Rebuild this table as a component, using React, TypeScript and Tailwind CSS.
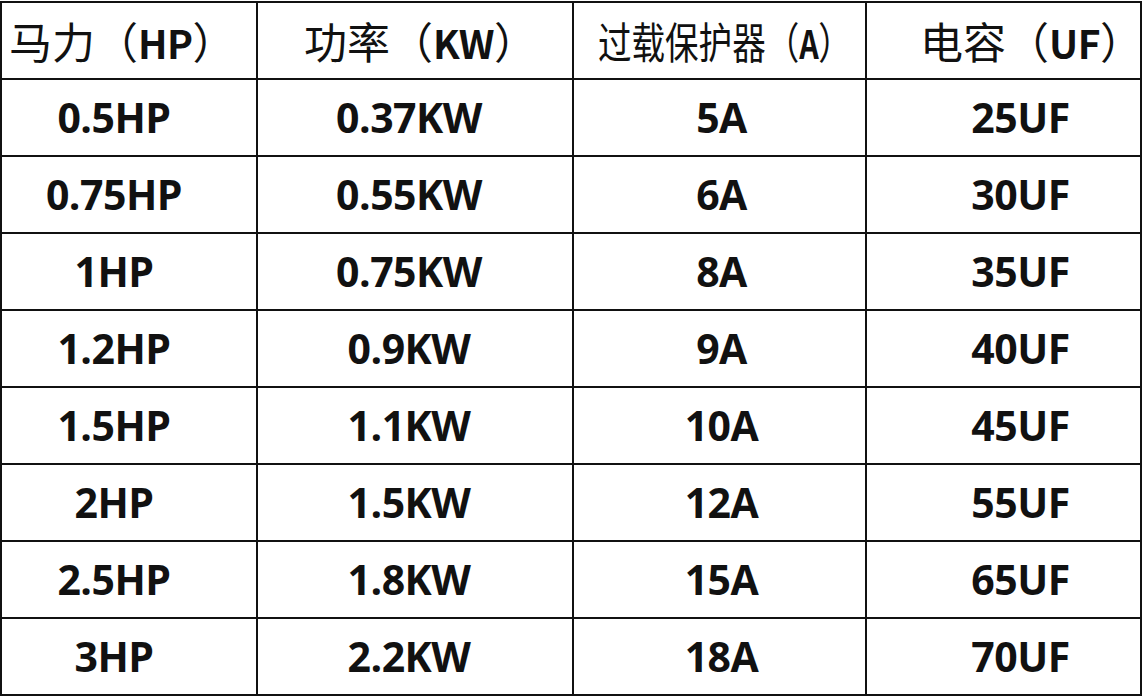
import React from 'react';

const headers = [
  { zh: '马力', unit: 'HP', pad: 'pl-[7px]', squeeze: false },
  { zh: '功率', unit: 'KW', pad: 'pl-[46px]', squeeze: false },
  { zh: '过载保护器', unit: 'A', pad: 'pl-[24px]', squeeze: true },
  { zh: '电容', unit: 'UF', pad: 'pl-[53px]', squeeze: false },
];

const rows = [
  ['0.5HP', '0.37KW', '5A', '25UF'],
  ['0.75HP', '0.55KW', '6A', '30UF'],
  ['1HP', '0.75KW', '8A', '35UF'],
  ['1.2HP', '0.9KW', '9A', '40UF'],
  ['1.5HP', '1.1KW', '10A', '45UF'],
  ['2HP', '1.5KW', '12A', '55UF'],
  ['2.5HP', '1.8KW', '15A', '65UF'],
  ['3HP', '2.2KW', '18A', '70UF'],
];

const bodyPad = ['pr-[30px]', 'pr-[12px]', 'pl-[4px]', 'pl-[34px]'];

const App = () => {
  return (
    <div className="w-[1142px] h-[699px] bg-white overflow-hidden">
      <table className="w-[1140px] table-fixed border-collapse text-[#111] mt-px">
        <colgroup>
          <col className="w-[256px]" />
          <col className="w-[316px]" />
          <col className="w-[293px]" />
          <col className="w-[275px]" />
        </colgroup>
        <thead>
          <tr className="h-[77px]">
            {headers.map((h) => (
              <th
                key={h.zh}
                className={`border-2 border-[#111] text-left align-middle whitespace-nowrap font-normal text-[43px] leading-none ${h.pad}`}
                style={{ fontFamily: '"Noto Sans CJK SC", sans-serif' }}
              >
                <span
                  className={
                    h.squeeze
                      ? 'inline-block origin-left scale-x-[0.78]'
                      : 'inline-block'
                  }
                >
                  {h.zh}（<span className="font-bold text-[39px] tracking-[-0.5px]">{h.unit}</span>
                  <span className="[font-feature-settings:'halt']">）</span>
                </span>
              </th>
            ))}
          </tr>
        </thead>
        <tbody>
          {rows.map((r, i) => (
            <tr key={i} className="h-[77px]">
              {r.map((c, j) => (
                <td
                  key={j}
                  className={`border-2 border-[#111] text-center align-middle font-bold text-[41px] leading-none tracking-[-0.5px] ${bodyPad[j]}`}
                  style={{ fontFamily: '"Open Sans", sans-serif' }}
                >
                  {c}
                </td>
              ))}
            </tr>
          ))}
        </tbody>
      </table>
    </div>
  );
};

export default App;
